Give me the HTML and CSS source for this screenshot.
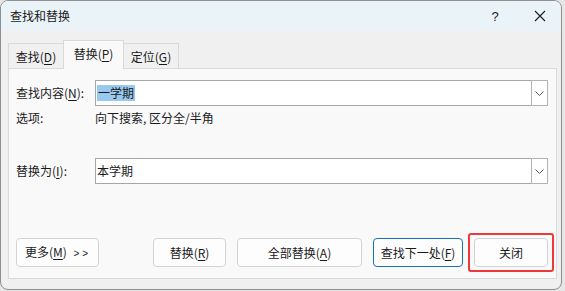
FILE: index.html
```html
<!DOCTYPE html>
<html lang="zh-CN">
<head>
<meta charset="utf-8">
<title>查找和替换</title>
<link rel="stylesheet" href="styles.css">
</head>
<body>
<div class="window">
  <div class="titlebar">
    <span class="title">查找和替换</span>
    <span class="help">?</span>
    <span class="close-x">
      <svg width="12" height="12" viewBox="0 0 12 12"><path d="M1 1 L11 11 M11 1 L1 11" stroke="#1c1c1c" stroke-width="1.1" fill="none"/></svg>
    </span>
  </div>
  <div class="tabs">
    <div class="tab">查找(<u>D</u>)</div>
    <div class="tab active">替换(<u>P</u>)</div>
    <div class="tab">定位(<u>G</u>)</div>
  </div>
  <div class="panel">
    <div class="row first">
      <span class="label">查找内容(<u>N</u>):</span>
      <div class="combo">
        <span class="value"><span class="sel">一学期</span></span>
        <span class="drop"><svg width="9" height="5" viewBox="0 0 9 5"><path d="M0.5 0.5 L4.5 4.5 L8.5 0.5" stroke="#555" stroke-width="1" fill="none"/></svg></span>
      </div>
    </div>
    <div class="row options">
      <span class="label">选项:</span>
      <span class="opt-text">向下搜索, 区分全/半角</span>
    </div>
    <div class="row third">
      <span class="label">替换为(<u>I</u>):</span>
      <div class="combo">
        <span class="value">本学期</span>
        <span class="drop"><svg width="9" height="5" viewBox="0 0 9 5"><path d="M0.5 0.5 L4.5 4.5 L8.5 0.5" stroke="#555" stroke-width="1" fill="none"/></svg></span>
      </div>
    </div>
    <div class="buttons">
      <button class="btn more">更多(<u>M</u>) <span class="arrows">&gt; &gt;</span></button>
      <button class="btn b-replace">替换(<u>R</u>)</button>
      <button class="btn b-all">全部替换(<u>A</u>)</button>
      <button class="btn b-next">查找下一处(<u>F</u>)</button>
      <div class="close-wrap">
        <button class="btn b-close">关闭</button>
        <span class="highlight"></span>
      </div>
    </div>
  </div>
</div>
</body>
</html>
```

FILE: styles.css
```css
* { box-sizing: border-box; }
html, body { margin: 0; padding: 0; }
body {
  width: 565px;
  height: 291px;
  background: #e6e6e6;
  font-family: "Noto Sans CJK SC", "Noto Sans", sans-serif;
  font-size: 12px;
  color: #1a1a1a;
  overflow: hidden;
}
u { text-decoration: underline; text-underline-offset: 2px; }

.window {
  width: 562px;
  height: 290px;
  border: 1px solid #8f8f8f;
  border-radius: 8px;
  overflow: hidden;
  background: #f0f0f0;
  display: flex;
  flex-direction: column;
}

.titlebar {
  height: 30px;
  flex: none;
  background: #eaf3f7;
  display: flex;
  align-items: center;
  padding-left: 9px;
}
.title { flex: 1; line-height: 16px; }
.help {
  font-family: "Liberation Sans", sans-serif;
  font-size: 13px;
  width: 12px;
  text-align: center;
  margin-right: 33px;
}
.close-x { width: 12px; height: 12px; margin-right: 15px; display: flex; }

.tabs {
  display: flex;
  align-items: flex-end;
  height: 37px;
  padding-left: 7px;
  flex: none;
}
.tab {
  height: 25px;
  width: 56px;
  border: 1px solid #d9d9d9;
  border-bottom: none;
  background: #f0f0f0;
  display: flex;
  align-items: center;
  justify-content: center;
  line-height: 16px;
  padding-top: 1px;
  margin-left: -1px;
}
.tab:first-child { margin-left: 0; }
.tab.active {
  height: 29px;
  width: 61px;
  background: #f9f9f9;
  margin-bottom: -1px;
  position: relative;
  z-index: 1;
  padding-top: 0;
  padding-bottom: 3px;
}

.panel {
  width: 549px;
  height: 211px;
  margin-left: 7px;
  border: 1px solid #dadada;
  background: #f9f9f9;
  padding: 11px 7px 0 7px;
  display: flex;
  flex-direction: column;
}

.row { display: flex; align-items: center; }
.label { width: 79px; flex: none; line-height: 16px; }
.row.options { margin-top: 4px; height: 16px; }
.row.third { margin-top: 32px; }
.opt-text { line-height: 16px; }

.combo {
  width: 453px;
  height: 26px;
  border: 1px solid #a6a6a6;
  background: #fff;
  display: flex;
}
.value {
  flex: 1;
  padding-left: 1px;
  display: flex;
  align-items: center;
  line-height: 16px;
}
.sel { background: #99c9ef; padding: 0 1px; }
.drop {
  width: 17px;
  margin: -1px -1px -1px 0;
  border: 1px solid #b4b4b4;
  background: #fff;
  display: flex;
  align-items: center;
  justify-content: center;
}

.buttons {
  display: flex;
  margin-top: 54px;
  align-items: center;
}
.btn {
  font: inherit;
  color: #1a1a1a;
  height: 29px;
  background: #fdfdfd;
  border: 1px solid #d3d3d3;
  border-radius: 4px;
  padding: 0;
  line-height: 16px;
}
.btn.more { width: 83px; text-align: left; padding-left: 8px; }
.arrows { font-family: "Liberation Sans", sans-serif; font-size: 10px; margin-left: 4px; }
.b-replace { width: 73px; margin-left: 54px; }
.b-all { width: 125px; margin-left: 11px; }
.b-next { width: 90px; margin-left: 11px; border-color: #1a6fc0; }
.close-wrap { position: relative; margin-left: 11px; display: flex; }
.b-close { width: 74px; }
.highlight {
  position: absolute;
  left: -6px;
  top: -5px;
  right: -6px;
  bottom: -5px;
  border: 2px solid #ec3a3a;
  border-radius: 3px;
  pointer-events: none;
}
```
